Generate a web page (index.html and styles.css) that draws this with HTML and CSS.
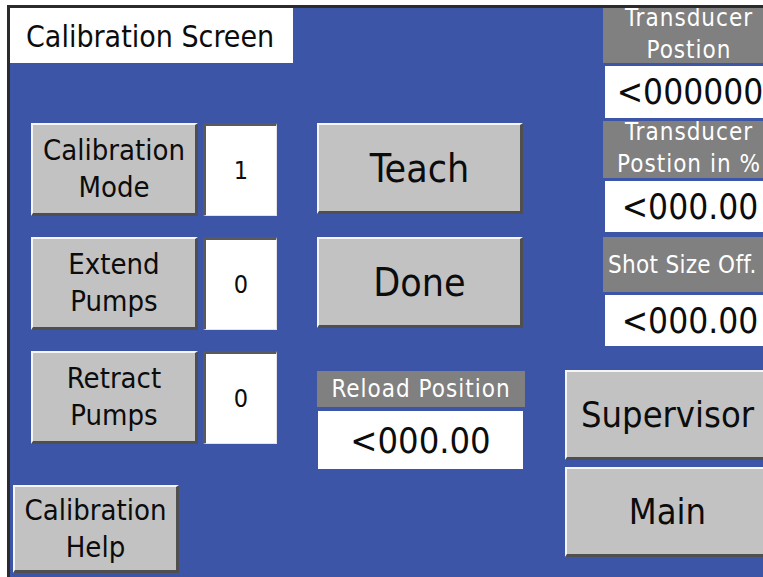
FILE: index.html
```html
<!DOCTYPE html>
<html lang="en">
<head>
    <meta charset="UTF-8">
    <meta name="viewport" content="width=device-width, initial-scale=1.0">
    <title>Calibration Screen</title>
    <link rel="stylesheet" href="styles.css">
</head>
<body>
    <div class="screen">
        <!-- left column: title and calibration switches -->
        <div class="col col-left">
            <div class="title">Calibration Screen</div>
            <div class="control-row first">
                <button class="btn btn-switch">Calibration<br>Mode</button>
                <div class="value-box">1</div>
            </div>
            <div class="control-row">
                <button class="btn btn-switch">Extend<br>Pumps</button>
                <div class="value-box">0</div>
            </div>
            <div class="control-row">
                <button class="btn btn-switch">Retract<br>Pumps</button>
                <div class="value-box">0</div>
            </div>
            <button class="btn btn-help">Calibration<br>Help</button>
        </div>

        <!-- middle column -->
        <div class="col col-mid">
            <button class="btn btn-big btn-teach">Teach</button>
            <button class="btn btn-big btn-done">Done</button>
            <div class="label label-reload">Reload Position</div>
            <div class="readout readout-reload">&lt;000.00</div>
        </div>

        <!-- right column: transducer readouts and navigation -->
        <div class="col col-right">
            <div class="label label-1">Transducer<br>Postion</div>
            <div class="readout readout-1">&lt;000000</div>
            <div class="label label-2">Transducer<br>Postion in %</div>
            <div class="readout readout-2">&lt;000.00</div>
            <div class="label label-3">Shot Size Off.</div>
            <div class="readout readout-3">&lt;000.00</div>
            <button class="btn btn-big btn-nav btn-supervisor">Supervisor</button>
            <button class="btn btn-big btn-nav btn-main">Main</button>
        </div>
    </div>
</body>
</html>
```

FILE: styles.css
```css
html, body {
    margin: 0;
    padding: 0;
    background: #fff;
    overflow: hidden;
}
body {
    font-family: "DejaVu Sans Condensed", "DejaVu Sans", sans-serif;
    font-stretch: condensed;
    color: #0c0c0c;
}
.screen {
    display: flex;
    margin: 5px 0 0 7px;
    width: 790px;
    height: 580px;
    background-color: #3d55a6;
    border-top: 3px solid #2b2b2b;
    border-left: 3px solid #2b2b2b;
    overflow: hidden;
}
.col {
    display: flex;
    flex-direction: column;
    align-items: flex-start;
    flex-shrink: 0;
}

/* buttons */
.btn {
    box-sizing: border-box;
    display: flex;
    align-items: center;
    justify-content: center;
    padding: 0;
    font-family: inherit;
    font-stretch: condensed;
    color: #0c0c0c;
    text-align: center;
    background-color: #c2c2c2;
    border-style: solid;
    border-width: 2px 3px 3px 2px;
    border-color: #f6f6f6 #4f4f4f #4f4f4f #f6f6f6;
    flex-shrink: 0;
}
.btn-switch {
    width: 167px;
    height: 93px;
    font-size: 29px;
    line-height: 37px;
}
.btn-help {
    width: 166px;
    height: 88px;
    margin: 41px 0 0 3px;
    font-size: 29px;
    line-height: 37px;
}
.btn-big {
    font-size: 36px;
}

/* left column */
.col-left {
    width: 283px;
}
.title {
    box-sizing: border-box;
    width: 283px;
    height: 55px;
    padding: 1px 0 0 16px;
    display: flex;
    align-items: center;
    background: #fff;
    font-size: 30px;
}
.control-row {
    display: flex;
    gap: 5px;
    margin: 21px 0 0 21px;
}
.control-row.first {
    margin-top: 60px;
}
.value-box {
    box-sizing: border-box;
    width: 74px;
    height: 93px;
    display: flex;
    align-items: center;
    justify-content: center;
    background: #fff;
    border-style: solid;
    border-width: 3px 1px 1px 3px;
    border-color: #5a5a5a #e4e4e4 #e4e4e4 #5a5a5a;
    font-size: 25px;
}

/* middle column */
.col-mid {
    width: 208px;
    margin-left: 24px;
}
.btn-teach,
.btn-done {
    width: 206px;
    height: 91px;
    font-size: 39px;
}
.btn-teach {
    margin-top: 115px;
}
.btn-done {
    margin-top: 23px;
}

/* labels and readouts */
.label {
    box-sizing: border-box;
    display: flex;
    align-items: center;
    justify-content: center;
    overflow: hidden;
    background-color: #808080;
    color: #fff;
    font-size: 24px;
    letter-spacing: 1px;
    text-align: center;
    white-space: nowrap;
    flex-shrink: 0;
}
.readout {
    box-sizing: border-box;
    display: flex;
    align-items: center;
    justify-content: center;
    overflow: hidden;
    background: #fff;
    font-size: 36px;
    white-space: nowrap;
    flex-shrink: 0;
}
.label-reload {
    width: 208px;
    height: 36px;
    margin-top: 43px;
}
.readout-reload {
    width: 205px;
    height: 58px;
    margin: 4px 0 0 1px;
}

/* right column */
.col-right {
    width: 225px;
    margin-left: 40px;
}
.col-right .label {
    width: 172px;
    margin-left: 38px;
    line-height: 32px;
    padding-bottom: 3px;
}
.col-right .readout {
    width: 170px;
    margin-left: 40px;
    font-size: 35px;
}
.label-1 {
    height: 55px;
}
.readout-1 {
    height: 52px;
    margin-top: 3px;
}
.label-2 {
    height: 57px;
    margin-top: 3px;
}
.readout-2 {
    height: 51px;
    margin-top: 3px;
}
.col-right .label-3 {
    height: 55px;
    margin-top: 5px;
    padding-bottom: 0;
    letter-spacing: 0.3px;
    justify-content: flex-start;
    padding-left: 5px;
}
.readout-3 {
    height: 51px;
    margin-top: 3px;
}
.btn-nav {
    width: 206px;
    height: 90px;
}
.btn-supervisor {
    margin-top: 24px;
}
.btn-main {
    margin-top: 7px;
}
```
